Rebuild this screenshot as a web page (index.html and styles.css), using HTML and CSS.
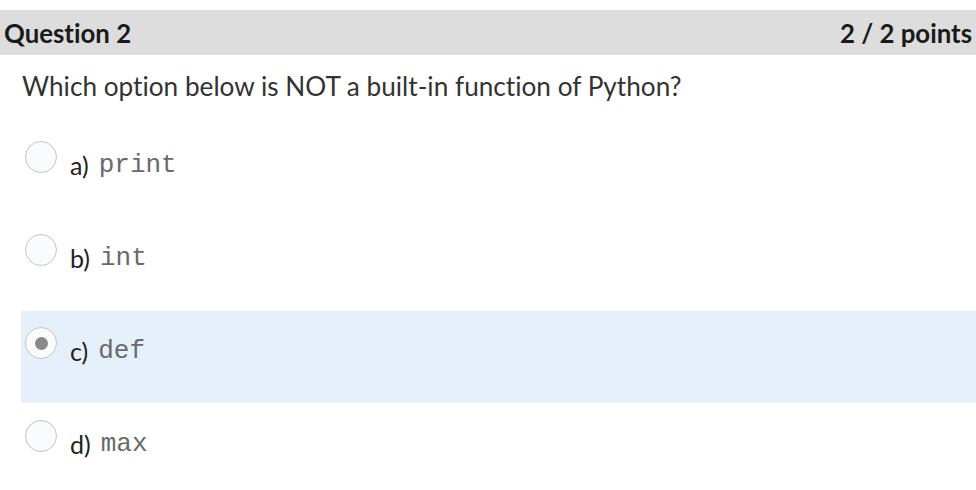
FILE: index.html
```html
<!DOCTYPE html>
<html>
<head>
<meta charset="utf-8">
<link rel="stylesheet" href="styles.css">
</head>
<body>
<div class="quiz">
  <div class="q-header">
    <span class="q-title">Question 2</span>
    <span class="q-points">2 / 2 points</span>
  </div>
  <div class="q-text">Which option below is NOT a built-in function of Python?</div>
  <div class="options">
    <div class="option">
      <span class="radio"></span>
      <span class="label">a)</span><code class="code">print</code>
    </div>
    <div class="option">
      <span class="radio"></span>
      <span class="label">b)</span><code class="code">int</code>
    </div>
    <div class="option selected">
      <span class="radio checked"></span>
      <span class="label">c)</span><code class="code">def</code>
    </div>
    <div class="option">
      <span class="radio"></span>
      <span class="label">d)</span><code class="code">max</code>
    </div>
  </div>
</div>
</body>
</html>
```
FILE: styles.css
```css
html, body {
  margin: 0;
  padding: 0;
  background: #ffffff;
}
body {
  font-family: Lato, "Liberation Sans", sans-serif;
  font-variant-ligatures: none;
  color: #2d3b45;
}
.quiz {
  padding-top: 10px;
}
.q-header {
  display: flex;
  justify-content: space-between;
  align-items: center;
  height: 45px;
  background: #dddddd;
  padding: 0 4px 0 4px;
  font-weight: 700;
  font-size: 25.8px;
  color: #1a1a1a;
}
.q-text {
  margin: 15px 0 0 22px;
  font-size: 26.2px;
  line-height: 32px;
  color: #333;
}
.options {
  margin-top: 23px;
  margin-left: 21px;
}
.option {
  display: flex;
  align-items: flex-start;
  height: 92px;
  margin-bottom: 1px;
  padding: 16px 0 0 4px;
  box-sizing: border-box;
}
.option.selected {
  background: #e6f0fa;
}
.radio {
  width: 32px;
  height: 32px;
  box-sizing: border-box;
  border: 1px solid #c4c4c4;
  border-radius: 50%;
  background: #fafbfd;
  display: flex;
  align-items: center;
  justify-content: center;
  flex: none;
}
.radio.checked::after {
  content: "";
  width: 13px;
  height: 13px;
  border-radius: 50%;
  background: #8a8a8a;
}
.label {
  margin-left: 13px;
  font-size: 25px;
  line-height: 30px;
  margin-top: 9px;
  color: #222;
}
.code {
  margin-left: 10px;
  font-family: "Liberation Mono", "Courier New", monospace;
  font-size: 26px;
  line-height: 30px;
  margin-top: 9px;
  color: #6a6a6a;
}
```
